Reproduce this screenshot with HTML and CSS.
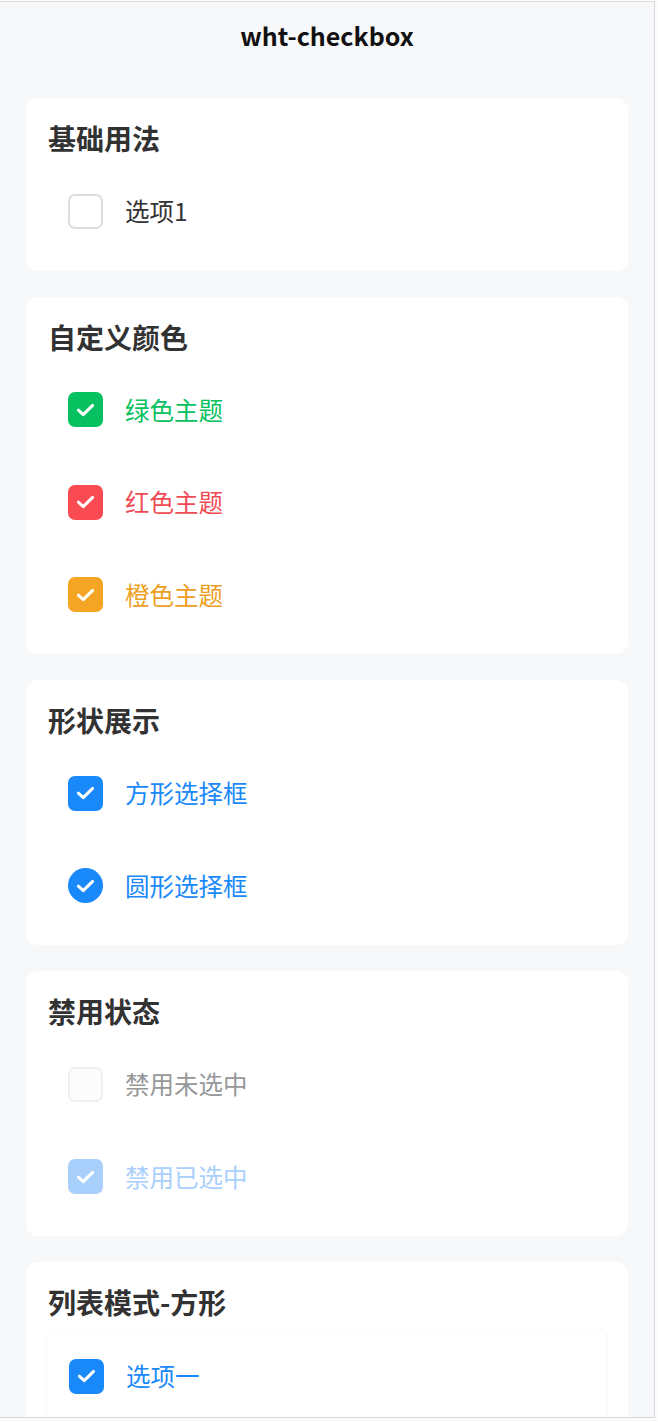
FILE: index.html
```html
<!DOCTYPE html>
<html lang="zh">
<head>
<meta charset="utf-8">
<title>wht-checkbox</title>
<link rel="stylesheet" href="styles.css">
</head>
<body>
<div class="frame">
  <header class="nav">wht-checkbox</header>
  <main class="content">
    <section class="card">
      <h2 class="card-title">基础用法</h2>
      <div class="item">
        <span class="box"></span>
        <span class="label">选项1</span>
      </div>
    </section>

    <section class="card">
      <h2 class="card-title">自定义颜色</h2>
      <div class="item green">
        <span class="box checked"><svg viewBox="0 0 20 14" class="tick"><path d="M2.5 7.2 L7.6 11.8 L17.5 2.2"/></svg></span>
        <span class="label">绿色主题</span>
      </div>
      <div class="item red">
        <span class="box checked"><svg viewBox="0 0 20 14" class="tick"><path d="M2.5 7.2 L7.6 11.8 L17.5 2.2"/></svg></span>
        <span class="label">红色主题</span>
      </div>
      <div class="item orange">
        <span class="box checked"><svg viewBox="0 0 20 14" class="tick"><path d="M2.5 7.2 L7.6 11.8 L17.5 2.2"/></svg></span>
        <span class="label">橙色主题</span>
      </div>
    </section>

    <section class="card">
      <h2 class="card-title">形状展示</h2>
      <div class="item blue">
        <span class="box checked"><svg viewBox="0 0 20 14" class="tick"><path d="M2.5 7.2 L7.6 11.8 L17.5 2.2"/></svg></span>
        <span class="label">方形选择框</span>
      </div>
      <div class="item blue">
        <span class="box checked round"><svg viewBox="0 0 20 14" class="tick"><path d="M2.5 7.2 L7.6 11.8 L17.5 2.2"/></svg></span>
        <span class="label">圆形选择框</span>
      </div>
    </section>

    <section class="card">
      <h2 class="card-title">禁用状态</h2>
      <div class="item disabled">
        <span class="box"></span>
        <span class="label">禁用未选中</span>
      </div>
      <div class="item disabled-checked">
        <span class="box checked"><svg viewBox="0 0 20 14" class="tick"><path d="M2.5 7.2 L7.6 11.8 L17.5 2.2"/></svg></span>
        <span class="label">禁用已选中</span>
      </div>
    </section>

    <section class="card">
      <h2 class="card-title">列表模式-方形</h2>
      <div class="list">
        <div class="item blue">
          <span class="box checked"><svg viewBox="0 0 20 14" class="tick"><path d="M2.5 7.2 L7.6 11.8 L17.5 2.2"/></svg></span>
          <span class="label">选项一</span>
        </div>
      </div>
    </section>
  </main>
</div>
</body>
</html>
```

FILE: styles.css
```css
* { box-sizing: border-box; }

html, body {
  margin: 0;
  padding: 0;
  background: #fbfbfc;
  height: 100%;
  overflow: hidden;
}

body {
  font-family: "Noto Sans CJK SC", "Noto Sans", "Liberation Sans", sans-serif;
  color: #323233;
}

.frame {
  margin-top: 1px;
  width: 655px;
  height: 1417px;
  border-top: 1px solid #dcdcdf;
  border-right: 1px solid #d6d7da;
  border-bottom: 1px solid #d6d7da;
  background: #f7f8fa;
  overflow: hidden;
}

.nav {
  height: 66px;
  display: flex;
  align-items: center;
  justify-content: center;
  font-size: 25px;
  font-weight: 700;
  color: #111;
}

.content {
  padding: 30px 26px 0 26px;
  display: flex;
  flex-direction: column;
  gap: 26px;
}

.card {
  background: #fff;
  border-radius: 12px;
  padding: 22px 22px 13px 22px;
}

.card-title {
  margin: 0 0 9px 0;
  height: 36px;
  line-height: 36px;
  font-size: 28px;
  font-weight: 700;
  color: #323233;
}

.item {
  height: 92.5px;
  display: flex;
  align-items: center;
  gap: 22px;
  padding-left: 20px;
}

.box {
  width: 35px;
  height: 35px;
  flex: none;
  border-radius: 7px;
  border: 2.5px solid #dcdee0;
  background: #fff;
  display: flex;
  align-items: center;
  justify-content: center;
}

.box.checked {
  border: none;
  background: #1989fa;
}

.box.round {
  border-radius: 50%;
}

.tick {
  width: 19px;
  height: 14px;
  fill: none;
  stroke: #fff;
  stroke-width: 3.2;
  stroke-linecap: round;
  stroke-linejoin: round;
}

.label {
  font-size: 24.5px;
  line-height: 34px;
}

.green .box.checked { background: #07c160; }
.green .label { color: #07c160; }

.red .box.checked { background: #fa4b53; }
.red .label { color: #f04b54; }

.orange .box.checked { background: #f4a524; }
.orange .label { color: #ec9f1f; }

.blue .box.checked { background: #1989fa; }
.blue .label { color: #1989fa; }

.disabled .box {
  background: #fcfcfd;
  border-color: #eeeff2;
}
.disabled .label { color: #969799; }

.disabled-checked .box.checked { background: #a9cffd; }
.disabled-checked .label { color: #a9cffd; }

.list {
  margin: 0 -2px;
  border: 1px solid #fafafb;
  border-radius: 8px;
  padding-left: 2px;
  padding-bottom: 40px;
}
```
